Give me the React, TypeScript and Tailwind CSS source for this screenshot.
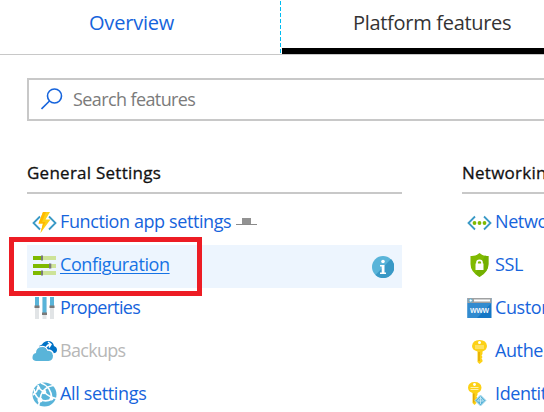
import type { ReactNode } from 'react';

const FunctionIcon = () => (
  <svg width="25" height="23" viewBox="0 0 25 23" fill="none">
    <path d="M8 5.500 1.500 12 8 18.500M17 5.500 23.500 12 17 18.500" stroke="#3999c6" strokeWidth="1.8" />
    <path d="M11 1h7l-4.500 7.500h5L8.500 22l2.500-9.500H6.500z" fill="#fcd116" />
    <path d="M11 1h3L10 11h3.500L8.500 22l2.500-9.500H6.500z" fill="#ffb900" />
  </svg>
);

const SlidersIcon = () => (
  <svg width="25" height="23" viewBox="0 0 25 23">
    <path d="M1 2h23v4H1zM1 10h23v4H1zM1 17h23v4H1z" fill="#cde398" />
    <path d="M1 2h9v4H1zM1 10h16v4H1zM1 17h9v4H1z" fill="#7fba00" />
    <path d="M9 1.500h2v5H9zM17 9.500h2.300v5H17zM9 16.500h2v5H9z" fill="#7a7a7a" />
  </svg>
);

const PropertiesIcon = () => (
  <svg width="25" height="24" viewBox="0 0 25 24">
    <path d="M3 1h4v22H3zM10.500 1h4v22h-4zM18 1h4v22h-4z" fill="#e1e4e6" />
    <path d="M3 1h4v9H3zM10.500 1h4v16h-4zM18 1h4v9h-4z" fill="#59b4d9" />
    <path d="M2.500 9.500h5v2.500h-5zM10 16.500h5V19h-5zM17.500 9.500h5v2.500h-5z" fill="#7a7a7a" />
  </svg>
);

const BackupIcon = () => (
  <svg width="25" height="23" viewBox="0 0 25 23">
    <path d="M7 6q2-.8 3-1.500Q12 1 16 1q5 0 6 5 3 1 3 4t-4 3.500H9z" fill="#0072c6" />
    <path d="M4 21q-4-.5-3.500-4 .3-3.500 3.500-4 0-5 5-6 4-.5 6 3.500 5.500-.5 6 5 0 5-4.500 5.500z" fill="#59b4d9" />
    <path d="M7 7q6-2 8.500 3 5 0 6 4.500" fill="none" stroke="white" strokeWidth="1.300" />
    <path d="M14 7.500q1.500-3 4.500-3M16 2l3 2.500-2 3" fill="none" stroke="white" strokeWidth="1.500" />
  </svg>
);

const WebIcon = () => (
  <svg width="25" height="25" viewBox="0 0 25 25">
    <circle cx="12.500" cy="12.500" r="12" fill="#59b4d9" />
    <g fill="none" stroke="white" strokeWidth="1.600">
      <path d="M6 3q.5 4 6 7 5 5 12 6.500M21 3.500Q12 5 9 13L6.500 24M2 7q1 8 6 10.500 6 3 12-.5M9 1q10 3 11 16M1 13q4-3 5-7" />
    </g>
    <g fill="white">
      <circle cx="6.500" cy="6" r="1.800" />
      <circle cx="12" cy="10" r="2.300" />
      <circle cx="8" cy="18" r="2.500" />
      <circle cx="19.500" cy="16.500" r="2" />
    </g>
  </svg>
);

const NetworkIcon = () => (
  <svg width="25" height="23" viewBox="0 0 25 23">
    <path d="M8 5.500 1.500 12 8 18.500M17 5.500 23.500 12 17 18.500" fill="none" stroke="#3999c6" strokeWidth="1.800" />
    <g fill="#7fba00">
      <circle cx="7.500" cy="12" r="1.900" />
      <circle cx="12.500" cy="12" r="1.900" />
      <circle cx="17.500" cy="12" r="1.900" />
    </g>
  </svg>
);

const ShieldIcon = () => (
  <svg width="25" height="24" viewBox="0 0 25 24">
    <path d="M12.500 0q3.500 3.500 9 3v8q0 8-9 13-9-5-9-13V3q5.500.5 9-3" fill="#7fba00" />
    <path d="M21.500 3v8q0 8-9 13-2-1-4-3L18 2.500q1.500.7 3.500.5" fill="#6dab00" opacity=".65" />
    <path d="M8.500 10.500h8V17h-8z" fill="white" />
    <path d="M10 11V9.500q0-2.200 2.500-2.200T15 9.500V11" fill="none" stroke="white" strokeWidth="1.700" />
  </svg>
);

const DomainIcon = () => (
  <svg width="25" height="22" viewBox="0 0 25 22">
    <path d="M.5 1h24v20H.5z" fill="#1577c5" />
    <path d="M.5 6h24L10 21H.5z" fill="#328bcf" />
    <path d="M.5 1h24v5H.5z" fill="#a0a1a2" />
    <circle cx="3.700" cy="3.500" r="1.600" fill="white" stroke="#59b4d9" />
    <path d="M7 2.500h16v2H7z" fill="white" />
    <text x="12.500" y="16.300" textAnchor="middle" fontFamily="Open Sans, sans-serif" fontWeight="600" fontSize="8" fill="white" textLength="19">www</text>
  </svg>
);

const KeyIcon = () => (
  <svg width="25" height="25" viewBox="0 0 25 25">
    <path d="M12.500 1q7 0 7.500 6-.2 4-4.500 5.500V15l-1 1.500 1 1.500-1 1.500 1 1.500v1.500l-3 2.500-2-2V12.500Q5 11 5 7q.5-6 7.500-6" fill="#fcd116" />
    <circle cx="12.500" cy="3.500" r="1.500" fill="white" />
    <path d="M8 7h9M8 9h9" stroke="#fff1a6" />
    <path d="M12 13v9" stroke="#dfa300" strokeWidth="1.300" />
  </svg>
);

const IdentityIcon = () => (
  <svg width="25" height="26" viewBox="0 0 25 26">
    <path d="M7.500 1q6.500 0 7 5.500-.2 4-4 5.500V14l-1 1.500 1 1.500-1 2v3l-2 2-2-2V12Q1 10.500 1 6.500 1.500 1 7.500 1" fill="#fcd116" />
    <circle cx="7.500" cy="3.500" r="1.400" fill="white" />
    <path d="M3.500 6.500h8M3.500 8.500h8" stroke="#fff1a6" />
    <path d="M6.800 12.500v9" stroke="#dfa300" strokeWidth="1.300" />
    <path d="m13.500 14 5.500 5.500-5.500 5.500L8 19.500z" fill="#59b4d9" stroke="#b5dfef" />
    <path d="M13.500 15.500v7.500M13.500 16.500l-3 3.500h6z" fill="none" stroke="#d3edf7" strokeWidth=".8" />
  </svg>
);

const InfoIcon = () => (
  <svg width="22" height="22" viewBox="0 0 22 22">
    <circle cx="11" cy="11" r="11" fill="#59b4d9" />
    <path d="M19 3A11 11 0 0 1 3.500 19z" fill="#3999c6" />
    <circle cx="11" cy="5.500" r="1.800" fill="white" />
    <path d="M8 9h4.500v7.500H14V18H8v-1.500h1.700v-6H8z" fill="white" />
  </svg>
);

type RowProps = { icon: ReactNode; label: string; text: string; children?: ReactNode; className?: string };

const Row = ({ icon, label, text, children, className = '' }: RowProps) => (
  <div className={`flex h-[43px] items-center pl-[5px] ${className}`}>
    <span className="mb-[3px] flex w-[25px] shrink-0 justify-center">{icon}</span>
    <span className={`mb-[5px] ml-[3px] shrink-0 text-[18px] leading-[24px] whitespace-nowrap ${text}`}>{label}</span>
    {children}
  </div>
);

const Heading = ({ children }: { children: ReactNode }) => (
  <h2 className="h-[34px] border-b-2 border-[#c8c8c8] text-[17px] leading-[26px] font-medium tracking-[0.25px] whitespace-nowrap text-[#111] [-webkit-text-stroke:0.3px_#111]">{children}</h2>
);

export default function App() {
  return (
    <div className="relative h-[412px] w-[544px] overflow-hidden bg-white font-['Open_Sans','Noto_Sans',sans-serif]">
      <nav className="flex h-[55px] border-b border-[#c8c8c8] text-[20px] leading-[28px]">
        <div className="w-[280px] shrink-0 pt-[9px] pl-[89px] tracking-[-0.2px] text-[#1664dc]">Overview</div>
        <svg className="shrink-0" width="2" height="55" viewBox="0 0 2 55">
          <path d="M.5 1v54" stroke="#00bcf2" strokeDasharray="4 2" />
        </svg>
        <div className="h-[54px] w-[262px] shrink-0 border-b-[6px] border-black pt-[9px] pl-[71px] tracking-[-0.3px] whitespace-nowrap text-[#333]">Platform features</div>
      </nav>
      <div className="mt-[23px] ml-[27px] flex h-[43px] w-[560px] items-center border-2 border-[#c8c8c8] pl-3">
        <svg className="mb-0.5" width="22" height="22" viewBox="0 0 22 22" fill="none" stroke="#1664dc" strokeWidth="1.600">
          <circle cx="13.500" cy="8" r="7" />
          <path d="m8.500 13-8 8" />
        </svg>
        <span className="mb-0.5 ml-[10px] text-[18px] leading-6 tracking-[-0.6px] text-[#7b7b7b]">Search features</span>
      </div>
      <main className="mt-[39px] ml-[27px] flex gap-[60px]">
        <section className="w-[375px] shrink-0">
          <Heading>General Settings</Heading>
          <div className="mt-2">
            <Row icon={<FunctionIcon />} label="Function app settings" text="text-[#1664dc] tracking-[-0.4px]">
              <svg className="mb-1 ml-[5px]" width="21" height="10" viewBox="0 0 21 10">
                <path d="M6 1h9v6H6z" fill="#929292" />
                <path d="M0 7.500h21" stroke="#8a8a8a" />
              </svg>
            </Row>
            <Row icon={<SlidersIcon />} label="Configuration" text="text-[#1673e5] tracking-[-0.4px] underline decoration-1 underline-offset-2" className="bg-[#edf5fe] pr-2">
              <span className="ml-auto"><InfoIcon /></span>
            </Row>
            <Row icon={<PropertiesIcon />} label="Properties" text="text-[#1664dc] tracking-[-0.7px]" />
            <Row icon={<BackupIcon />} label="Backups" text="text-[#b7b7b7] tracking-[-0.7px]" />
            <Row icon={<WebIcon />} label="All settings" text="text-[#1664dc] tracking-[-0.35px]" />
          </div>
        </section>
        <section className="w-[375px] shrink-0">
          <Heading>Networking</Heading>
          <div className="mt-2">
            <Row icon={<NetworkIcon />} label="Networking" text="text-[#1664dc] tracking-[-0.4px]" />
            <Row icon={<ShieldIcon />} label="SSL" text="text-[#1664dc] tracking-[-0.4px]" />
            <Row icon={<DomainIcon />} label="Custom domains" text="text-[#1664dc] tracking-[-0.4px]" />
            <Row icon={<KeyIcon />} label="Authentication" text="text-[#1664dc] tracking-[-0.4px]" />
            <Row icon={<IdentityIcon />} label="Identity" text="text-[#1664dc] tracking-[-0.4px]" />
          </div>
        </section>
      </main>
      <div className="absolute top-[237px] left-[9px] h-[59px] w-[193px] border-5 border-[#ed1c24]" />
    </div>
  );
}
